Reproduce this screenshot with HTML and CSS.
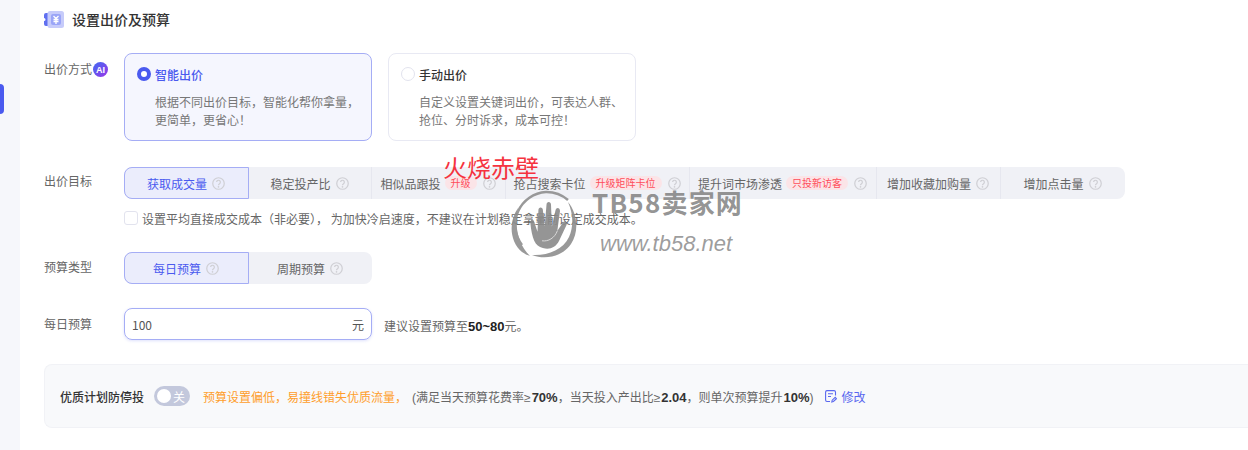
FILE: index.html
```html
<!DOCTYPE html>
<html lang="zh-CN">
  <head>
    <meta charset="utf-8" />
    <title>设置出价及预算</title>
    <link rel="stylesheet" href="styles.css">
  </head>

  <body>
    <svg class="svg-defs" width="0" height="0">
      <defs>
        <linearGradient id="ai-fill" x1="0" y1="0" x2="1" y2="1">
          <stop offset="0" stop-color="#3f6bf2" />
          <stop offset="1" stop-color="#9a35e8" />
        </linearGradient>
      </defs>
      <symbol id="help" viewBox="0 0 14 14">
        <circle cx="7" cy="7" r="6.2" fill="none" stroke="currentColor" stroke-width="1.3" />
        <path d="M5 5.500a2 2 0 1 1 3.100 1.700c-.7.500-1.100.8-1.100 1.600" fill="none" stroke="currentColor" stroke-width="1.300" />
        <circle cx="7" cy="10.600" r=".9" fill="currentColor" />
      </symbol>
    </svg>

    <div class="side">
      <div class="side-mark"></div>
    </div>

    <div class="panel">
      <h2 class="title">
        <svg class="title-icon" width="20" height="17" viewBox="0 0 20 17">
          <path d="M2 2h10v13H2a2 2 0 0 1-2-2v-3a1.500 1.500 0 0 0 0-3V4a2 2 0 0 1 2-2z" fill="#5f6ff0" />
          <rect x="3.500" y="0" width="16.500" height="17" rx="2.500" fill="#c6cbfa" />
          <rect x="7" y="3" width="10" height="11" rx="2" fill="#9aa5f7" />
          <path d="M9.500 5 12 7.500 14.500 5M9.500 8.500h5M9.500 10.500h5M12 7.500V13" fill="none" stroke="#fff" stroke-width="1.300" />
        </svg>
        设置出价及预算
      </h2>

      <div class="row row-mode">
        <div class="label">出价方式
          <svg class="ai" width="15" height="15" viewBox="0 0 15 15">
            <circle cx="7.500" cy="7.500" r="7.500" fill="url(#ai-fill)" />
            <text x="7.500" y="10.800" text-anchor="middle">AI</text>
          </svg>
        </div>
        <div class="cards">
          <div class="card card-on">
            <div class="card-head"><span class="radio radio-on"></span>智能出价</div>
            <p>根据不同出价目标，智能化帮你拿量，<br>更简单，更省心！</p>
          </div>
          <div class="card">
            <div class="card-head"><span class="radio"></span>手动出价</div>
            <p>自定义设置关键词出价，可表达人群、<br>抢位、分时诉求，成本可控！</p>
          </div>
        </div>
      </div>

      <div class="row row-goal">
        <div class="label">出价目标</div>
        <div class="goal-body">
          <div class="tabs tabs-goal">
            <div class="tab tab-on">获取成交量<svg class="help"><use href="#help" /></svg></div>
            <div class="tab">稳定投产比<svg class="help"><use href="#help" /></svg></div>
            <div class="tab">相似品跟投<span class="tag">升级</span><svg class="help"><use href="#help" /></svg></div>
            <div class="tab">抢占搜索卡位<span class="tag">升级矩阵卡位</span><svg class="help"><use href="#help" /></svg></div>
            <div class="tab">提升词市场渗透<span class="tag">只投新访客</span><svg class="help"><use href="#help" /></svg></div>
            <div class="tab">增加收藏加购量<svg class="help"><use href="#help" /></svg></div>
            <div class="tab">增加点击量<svg class="help"><use href="#help" /></svg></div>
          </div>
          <div class="check-line">
            <span class="checkbox"></span>
            <span>设置平均直接成交成本（非必要），&nbsp;为加快冷启速度，不建议在计划稳定拿量前设定成交成本。</span>
          </div>
        </div>
      </div>

      <div class="row row-type">
        <div class="label">预算类型</div>
        <div class="tabs tabs-type">
          <div class="tab tab-on">每日预算<svg class="help"><use href="#help" /></svg></div>
          <div class="tab">周期预算<svg class="help"><use href="#help" /></svg></div>
        </div>
      </div>

      <div class="row row-budget">
        <div class="label">每日预算</div>
        <div class="input"><span>100</span><span>元</span></div>
        <div class="hint">建议设置预算至<b>50~80</b>元。</div>
      </div>

      <div class="guard">
        <b class="guard-name">优质计划防停投</b>
        <span class="switch"><i></i>关</span>
        <span class="warn">预算设置偏低，易撞线错失优质流量，</span>
        <span class="rule">(满足当天预算花费率≥<b>70%</b>，当天投入产出比≥<b>2.04</b>，则单次预算提升<b>10%</b>)</span>
        <span class="edit">
          <svg width="12" height="13" viewBox="0 0 12 13">
            <path d="M10.500 5.500V2A1.500 1.500 0 0 0 9 .6H2A1.500 1.500 0 0 0 .6 2v8A1.500 1.500 0 0 0 2 11.500h3M3 3.800h5M3 6.500h3M6.800 12l.4-1.800 3-2.800 1.200 1.300-3 2.800z" fill="none" stroke="currentColor" stroke-width="1.100" />
          </svg>
          修改
        </span>
      </div>
    </div>

    <div class="stamp">火烧赤壁</div>

    <div class="watermark">
      <svg class="wm-logo" width="72" height="70" viewBox="0 0 72 70">
        <path d="M12 55A33 33 0 0 1 36 2a33 33 0 0 1 22 8" fill="none" stroke="#8f8f8f" stroke-width="2.500" />
        <path d="M8 18C-2 32 0 52 12 62c3 2 5 3 8 4C8 54 4 36 8 18z" fill="#8f8f8f" />
        <path d="M58 12c10 12 11 30 3 42-9 13-26 16-39 11 15 1 31-5 37-18 5-11 4-24-1-35z" fill="#8f8f8f" />
        <g transform="translate(5 4) scale(.9)">
          <path d="M21 30l4 12 1-24c0-4 5-4 5 0l2 18 2-24c0-4 5-4 5 0l1 24 4-18c1-4 5-3 5 1l-3 22 6-9c2-3 6-1 4 3l-8 17c-4 8-11 10-18 8-9-2-12-10-14-28 0-4 3-5 4-2z" fill="#8a8a8a" />
          <path d="M30 52c7 1 14-3 17-11" fill="none" stroke="#ddd" stroke-width="1" />
        </g>
      </svg>
      <div class="wm-text">
        <div class="wm-name">TB58卖家网</div>
        <div class="wm-url">www.tb58.net</div>
      </div>
    </div>
  </body>
</html>
```

FILE: styles.css
```css
* {
  box-sizing: border-box;
}

html,
body {
  height: 450px;
  overflow: hidden;
}

body {
  margin: 0;
  display: flex;
  background-color: #fff;
  color: #666;
  font-size: 12px;
  font-family: "Noto Sans CJK SC", "Noto Sans", sans-serif;
  position: relative;
}

.svg-defs {
  position: absolute;
}

.side {
  width: 20px;
  flex: none;
  background: #f6f7fb;
  padding-top: 84px;
}

.side-mark {
  width: 4px;
  height: 30px;
  background: #4a5aef;
  border-radius: 0 4px 4px 0;
}

.panel {
  flex: 1;
  min-width: 0;
  padding: 0 0 0 24px;
}

.title {
  margin: 0;
  height: 53px;
  padding-bottom: 15px;
  display: flex;
  align-items: center;
  gap: 8px;
  font-size: 14px;
  font-weight: 500;
  color: #333;
}

.row {
  display: flex;
}

.label {
  width: 80px;
  flex: none;
  display: flex;
  align-items: flex-start;
  line-height: 18px;
  color: #666;
}

.ai {
  margin: 2px 0 0 1px;
}

.ai text {
  fill: #fff;
  font-family: "Liberation Sans", sans-serif;
  font-size: 9px;
  font-weight: 700;
}

.row-mode .label {
  padding-top: 7px;
}

.cards {
  display: flex;
  gap: 16px;
}

.card {
  width: 248px;
  height: 88px;
  padding: 11px 12px 0;
  border: 1px solid #e8e9f3;
  border-radius: 8px;
  background: #fff;
}

.card-on {
  border-color: #a5adf5;
  background: #f5f6fe;
}

.card-head {
  display: flex;
  align-items: center;
  gap: 4px;
  height: 18px;
  font-weight: 500;
  color: #333;
}

.card-on .card-head {
  color: #4a5aef;
}

.card p {
  margin: 10px 0 0 18px;
  line-height: 18px;
  color: #777;
}

.radio {
  width: 14px;
  height: 14px;
  flex: none;
  border: 1px solid #e2e3ee;
  border-radius: 50%;
  background: #fff;
}

.radio-on {
  border: 4px solid #4a5aef;
}

.row-goal {
  margin-top: 26px;
}

.row-goal .label {
  padding-top: 5px;
}

.goal-body {
  flex: none;
}

.tabs {
  display: grid;
  height: 32px;
  border-radius: 8px;
  background: #f0f1f6;
}

.tabs-goal {
  width: 1001px;
  grid-template-columns: 125px 123px 134px 184px 187px 124px 124px;
}

.tabs-type {
  width: 248px;
  grid-template-columns: 125px 123px;
}

.tab {
  display: flex;
  align-items: center;
  justify-content: center;
  padding-right: 1px;
  white-space: nowrap;
  color: #666;
  border-right: 1px solid #e6e7ef;
}

.tab:last-child {
  border-right: 0;
}

.tab-on {
  color: #4a5aef;
  background: #ebedfc;
  border: 1px solid #a5adf5;
  border-radius: 8px 0 0 8px;
}

.help {
  width: 13px;
  height: 13px;
  margin-left: 5px;
  color: #cfcfd4;
}

.tag {
  height: 14px;
  margin: 0 1px 0 4px;
  padding: 0 6px;
  border-radius: 7px;
  background: #fbe4e7;
  color: #ff4d5a;
  font-size: 10px;
  line-height: 14px;
}

.check-line {
  display: flex;
  align-items: center;
  gap: 4px;
  height: 16px;
  margin-top: 11px;
  color: #666;
}

.checkbox {
  width: 14px;
  height: 14px;
  border: 1px solid #e2e3ee;
  border-radius: 3px;
  background: #fff;
}

.row-type {
  margin-top: 26px;
}

.row-type .label {
  padding-top: 6px;
}

.row-budget {
  margin-top: 24px;
  align-items: center;
}

.input {
  width: 248px;
  height: 32px;
  display: flex;
  align-items: center;
  justify-content: space-between;
  padding: 0 7px;
  border: 1px solid #a5adf5;
  border-radius: 8px;
  box-shadow: 0 1px 3px rgba(74, 90, 239, 0.18);
  color: #555;
}

.hint {
  margin: 2px 0 0 12px;
  color: #666;
}

.hint b {
  font-family: "Liberation Sans", sans-serif;
  font-size: 13px;
  color: #222;
}

.guard {
  margin-top: 24px;
  height: 64px;
  display: flex;
  align-items: center;
  padding-left: 15px;
  border: 1px solid #f1f2f6;
  border-right: 0;
  border-radius: 8px 0 0 8px;
  background: #f8f9fb;
  white-space: nowrap;
}

.guard-name {
  font-weight: 500;
  color: #333;
}

.switch {
  width: 36px;
  height: 20px;
  margin-left: 10px;
  padding: 2px 3px;
  display: flex;
  align-items: center;
  gap: 2px;
  border-radius: 10px;
  background: #c3c8dc;
  color: #fff;
}

.switch i {
  width: 14px;
  height: 14px;
  border-radius: 50%;
  background: #fff;
}

.warn {
  margin-left: 13px;
  color: #ff9e2c;
}

.rule {
  margin-left: 5px;
  font-family: "Liberation Sans", "Noto Sans CJK SC", sans-serif;
  color: #666;
}

.rule b {
  margin-left: 1px;
  font-size: 13px;
  color: #333;
}

.edit {
  display: flex;
  align-items: center;
  gap: 5px;
  margin-left: 11px;
  padding-top: 1px;
  color: #5a68ef;
}

.stamp {
  position: absolute;
  left: 443px;
  top: 152px;
  font-size: 24px;
  line-height: 30px;
  color: #f5333f;
}

.watermark {
  position: absolute;
  left: 510px;
  top: 190px;
  display: flex;
  gap: 10px;
  pointer-events: none;
}

.wm-logo {
  opacity: 0.9;
}

.wm-name {
  margin-top: -3px;
  font-size: 26px;
  line-height: 30px;
  font-weight: 700;
  color: rgba(120, 120, 120, 0.8);
  letter-spacing: 1.2px;
}

.wm-url {
  margin: 15px 0 0 8px;
  font-family: "Liberation Sans", sans-serif;
  font-size: 22px;
  line-height: 24px;
  font-style: italic;
  color: rgba(140, 140, 140, 0.85);
}
```
